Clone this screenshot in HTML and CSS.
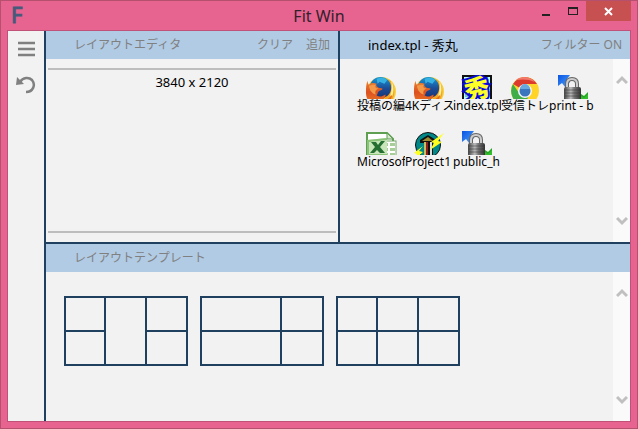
FILE: index.html
```html
<!DOCTYPE html>
<html lang="ja">
<head>
<meta charset="utf-8">
<title>Fit Win</title>
<link rel="stylesheet" href="styles.css">
</head>
<body>
<svg class="defs" aria-hidden="true">
  <defs>
    <linearGradient id="globe" x1="0" y1="0" x2="0" y2="1"><stop offset="0" stop-color="#1798d8"/><stop offset=".55" stop-color="#1c4b94"/><stop offset="1" stop-color="#173378"/></linearGradient>
    <linearGradient id="fur" x1="0" y1="0" x2="0" y2="1"><stop offset="0" stop-color="#e98532"/><stop offset=".45" stop-color="#dc5121"/><stop offset="1" stop-color="#ef8020"/></linearGradient>
    <linearGradient id="metal" x1="0" y1="0" x2="1" y2="0"><stop offset="0" stop-color="#444"/><stop offset=".4" stop-color="#bbb"/><stop offset=".6" stop-color="#777"/><stop offset="1" stop-color="#333"/></linearGradient>
    <linearGradient id="arrow" x1="0" y1="0" x2="1" y2="1"><stop offset="0" stop-color="#0b55e0"/><stop offset="1" stop-color="#4aa0ff"/></linearGradient>
    <symbol id="firefox" viewBox="0 0 32 32">
      <circle cx="17" cy="16" r="15" fill="#f6d03c"/>
      <path d="M24 3c6 4 7 11 6 17-2 6-7 11-14 11 5-7 9-16 8-28z" fill="#f2a51f"/>
      <circle cx="16" cy="12" r="11" fill="url(#globe)"/>
      <path d="M12 3c4-2 9-1 11 1l-3 4-5-2-2 2z" fill="#35b1e2"/>
      <path d="M27 5c3 5 3 11 1 16l-2-1c2-5 2-10 1-15z" fill="#fff09a"/>
      <path d="M3 5c0 2 0 3 1 4 2-2 5-2 8-1-1 2 0 3 2 4l4 1c0 2-3 2-4 3s-1 3-2 4c3 2 6 1 9-1 1 3-2 5-4 6 5 1 9-3 11-6-1 8-6 12-13 12C6 31 1 25 1 17c0-5 0-9 2-12z" fill="url(#fur)"/>
      <path d="M4 10c3-1 5-1 7-1-1 2 0 4 3 4-3 1-4 3-3 6-4-1-6-4-7-9z" fill="#f29a48"/>
    </symbol>
    <symbol id="chrome" viewBox="0 0 32 32">
      <circle cx="16" cy="16" r="14" fill="#ffd328"/>
      <path d="M16 16L4 9A14 14 0 0 1 28 9H16z" fill="#dd3a2e"/>
      <path d="M4 9a14 14 0 0 0 11 21l6-11-5-3-6 2z" fill="#3fae49"/>
      <path d="M7 5c6-5 15-3 19 2-6-3-13-3-19-2z" fill="#f07a6b"/>
      <circle cx="16" cy="16" r="7" fill="#f6f6f6"/>
      <circle cx="16" cy="16" r="5.500" fill="#3976bd"/>
      <path d="M11 14a5 5 0 0 1 10 0z" fill="#69a7df"/>
    </symbol>
    <symbol id="lock" viewBox="0 0 32 32">
      <path d="M1 0h12l-3 4 3 3-5 5-3-4-4 3z" fill="url(#arrow)"/>
      <path d="M31 31V17l-4 4-3-2-5 6 4 3-4 4z" fill="#23a722"/>
      <path d="M10 14V9c0-4 2-5 5-5s5 1 5 5v5" fill="none" stroke="#666" stroke-width="4"/>
      <path d="M10 13V9c0-4 2-5 5-5s5 1 5 5v4" fill="none" stroke="#ccc" stroke-width="2"/>
      <rect x="7" y="12" width="17" height="14" rx="2" fill="url(#metal)"/>
      <path d="M8 15h15M8 18h15M8 21h15" stroke="#333" opacity=".5"/>
      <path d="M24 26v-5l3 2 4-4v9z" fill="#31bd2c"/>
    </symbol>
    <symbol id="excel" viewBox="0 0 32 32">
      <path d="M2 2h20l6 6v24H2z" fill="#fff" stroke="#5f9f52" stroke-width="2"/>
      <path d="M22 2v6h6z" fill="#d5e8cf" stroke="#5f9f52"/>
      <rect x="15" y="10" width="16" height="21" fill="#fff" stroke="#75a86a"/>
      <path d="M17 12h6v3h-6zM25 12h5v3h-5zM17 17h6v3h-6zM25 17h5v3h-5zM17 22h6v3h-6zM25 22h5v3h-5z" fill="#a7ce98"/>
      <path d="M2 9l20-2v17H2z" fill="#c9e5ba"/>
      <path d="M2 9l20-2v2L4 11v12h18v2H2z" fill="#8ac279"/>
      <path d="M6 11h5l2 3 3-4h4l-5 6 5 6h-5l-3-3-3 3H5l5-6z" fill="#246f31"/>
    </symbol>
    <symbol id="project" viewBox="0 0 32 32">
      <circle cx="15" cy="14" r="12.500" fill="#088" stroke="#111"/>
      <path d="M15 4l8 5v3h-3v14h-9V12H7V9z" fill="#111"/>
      <path d="M15 6l5 4H9z" fill="#9b8c32"/>
      <path d="M12 11v14" stroke="#c9bd62" stroke-width="2"/>
      <path d="M14 11v14" stroke="#8f1f1d" stroke-width="2"/>
      <path d="M18 11v14" stroke="#ddd" stroke-width="2"/>
      <path d="M31 2l-6 8 4 1-12 8 4-7-3-1z" fill="#ffff20"/>
      <path d="M10 15l-4 5 4 1-10 9 4-7-3-1z" fill="#ffff20"/>
    </symbol>
    <symbol id="hidemaru" viewBox="0 0 32 32">
      <path d="M2 1h28v28H2z" fill="#b5ffff" stroke="#111" stroke-width="2"/>
      <path d="M4 5h24M4 9h24M4 13h24M4 17h24M4 21h24" stroke="#3a8890"/>
      <text class="glyph" x="16" y="23" transform="rotate(-14 16 14)">秀</text>
    </symbol>
    <symbol id="up" viewBox="0 0 12 10"><path d="M1 8l5-5 5 5" fill="none" stroke="#c0c0c0" stroke-width="3"/></symbol>
    <symbol id="down" viewBox="0 0 12 10"><path d="M1 2l5 5 5-5" fill="none" stroke="#c0c0c0" stroke-width="3"/></symbol>
  </defs>
</svg>
<div class="window">
  <header class="titlebar">
    <span class="logo">F</span>
    <h1 class="title">Fit Win</h1>
    <div class="controls">
      <button class="control" aria-label="最小化"><svg width="10" height="10"><path d="M1 9h8" stroke="#222" stroke-width="2"/></svg></button>
      <button class="control" aria-label="最大化"><svg width="10" height="10"><path d="M0 1h10v8H0zM1 3v5h8V3z" fill="#222" fill-rule="evenodd"/></svg></button>
      <button class="control close" aria-label="閉じる"><svg width="10" height="10"><path d="M1 2l7 7M8 2l-7 7" stroke="#fff" stroke-width="2"/></svg></button>
    </div>
  </header>
  <div class="client">
    <nav class="sidebar">
      <button class="tool" aria-label="メニュー"><svg width="20" height="20"><path d="M2 4h17M2 10h17M2 16h17" stroke="#808080" stroke-width="2.400"/></svg></button>
      <button class="tool" aria-label="元に戻す"><svg width="20" height="20"><path d="M4 7C7 2 13 2 16 5c4 5 1 12-6 12" fill="none" stroke="#808080" stroke-width="2.500"/><path d="M1 2l-1 8 8-1z" fill="#808080"/></svg></button>
    </nav>
    <main class="workspace">
      <div class="upper">
        <section class="editor">
          <header class="bar"><h2>レイアウトエディタ</h2><button class="action">クリア</button><button class="action">追加</button></header>
          <div class="canvas">3840 x 2120</div>
        </section>
        <section class="windows">
          <header class="bar"><h2 class="current">index.tpl - 秀丸</h2><button class="action">フィルター ON</button></header>
          <div class="scroller">
            <ul class="apps">
              <li class="app"><svg class="icon" viewBox="0 0 32 24"><use href="#firefox" y="1" width="31" height="31"/></svg><span>投稿の編集</span></li>
              <li class="app"><svg class="icon" viewBox="0 0 32 24"><use href="#firefox" y="1" width="31" height="31"/></svg><span>4Kディスプ</span></li>
              <li class="app"><svg class="icon" viewBox="0 0 32 24"><use href="#hidemaru" width="32" height="32"/></svg><span>index.tpl</span></li>
              <li class="app"><svg class="icon" viewBox="0 0 32 24"><use href="#chrome" width="32" height="32"/></svg><span>受信トレイ</span></li>
              <li class="app"><svg class="icon" viewBox="0 0 32 24"><use href="#lock" width="32" height="32"/></svg><span>print - b</span></li>
              <li class="app"><svg class="icon" viewBox="0 0 32 24"><use href="#excel" width="32" height="32"/></svg><span>Microsoft</span></li>
              <li class="app"><svg class="icon" viewBox="0 0 32 24"><use href="#project" width="32" height="32"/></svg><span>Project1</span></li>
              <li class="app"><svg class="icon" viewBox="0 0 32 24"><use href="#lock" width="32" height="32"/></svg><span>public_h</span></li>
            </ul>
            <div class="scrollbar"><button class="arrow" aria-label="上へ"><svg width="12" height="10"><use href="#up"/></svg></button><button class="arrow" aria-label="下へ"><svg width="12" height="10"><use href="#down"/></svg></button></div>
          </div>
        </section>
      </div>
      <section class="templates">
        <header class="bar"><h2>レイアウトテンプレート</h2></header>
        <div class="scroller">
          <div class="gallery">
            <div class="layout thirds"><i></i><i class="tall"></i><i></i><i></i><i></i></div>
            <div class="layout wide"><i></i><i></i><i></i><i></i></div>
            <div class="layout thirds"><i></i><i></i><i></i><i></i><i></i><i></i></div>
          </div>
          <div class="scrollbar"><button class="arrow" aria-label="上へ"><svg width="12" height="10"><use href="#up"/></svg></button><button class="arrow" aria-label="下へ"><svg width="12" height="10"><use href="#down"/></svg></button></div>
        </div>
      </section>
    </main>
  </div>
</div>
</body>
</html>
```
FILE: styles.css
```css
* { box-sizing: border-box; }
body { margin: 0; font: 12px/14px "Noto Sans", "Noto Sans CJK JP", sans-serif; color: #000; }
button { padding: 0; border: 0; background: none; font: inherit; color: inherit; }
svg { display: block; }
h1, h2 { margin: 0; font-weight: 400; }
.defs { position: absolute; width: 0; height: 0; }

.window { display: flex; flex-direction: column; min-height: 100vh; padding: 0 6px 6px; border: 1px solid #b5506f; background: #e6648f; }
.titlebar { display: grid; grid-template-columns: 1fr auto 1fr; height: 29px; }
.logo { padding-left: 4px; font-size: 22px; line-height: 26px; color: #465a7c; -webkit-text-stroke: 1px #465a7c; }
.title { font-size: 16px; line-height: 31px; color: #33202d; }
.controls { display: flex; justify-content: flex-end; }
.control { display: flex; align-items: center; justify-content: center; width: 27px; height: 20px; }
.close { width: 45px; background: #c75050; }

.client { flex: 1; display: flex; border: 1px solid #c0527a; background: #f2f2f2; }
.sidebar { display: flex; flex-direction: column; align-items: center; gap: 16px; width: 38px; padding-top: 8px; border-right: 2px solid #204060; }
.workspace { flex: 1; display: grid; grid-template-rows: 213fr 177fr; min-width: 0; }
.upper { display: grid; grid-template-columns: 294fr 290fr; border-bottom: 2px solid #204060; }
.editor, .windows, .templates { display: flex; flex-direction: column; min-width: 0; }
.editor { border-right: 2px solid #204060; }
.bar { display: flex; align-items: center; gap: 13px; height: 28px; padding: 0 8px 0 28px; background: #b1cbe4; color: #808080; }
.bar h2 { flex: 1; font-size: 12px; }
.bar .current { font-size: 13px; color: #000; }
.canvas { flex: 1; margin: 9px 2px; padding-top: 5px; border: solid #bdbdbd; border-width: 2px 0; font-size: 13px; text-align: center; }

.scroller { flex: 1; display: flex; }
.scrollbar { display: flex; flex-direction: column; justify-content: space-between; align-items: center; width: 17px; padding: 16px 0; background: #fafafa; }
.apps { flex: 1; display: grid; grid-template-columns: repeat(auto-fill, 48px); align-content: start; row-gap: 18px; margin: 0; padding: 16px 0 0 17px; list-style: none; }
.app { display: flex; flex-direction: column; align-items: center; }
.icon { width: 32px; height: 24px; }
.app span { width: 48px; overflow: hidden; white-space: nowrap; }
.glyph { font: 900 25px "Noto Sans CJK JP", sans-serif; text-anchor: middle; fill: #ffff28; stroke: #0808d8; stroke-width: 4px; paint-order: stroke; }

.gallery { flex: 1; display: flex; flex-wrap: wrap; align-content: start; gap: 12px; padding: 24px 18px; }
.layout { display: grid; grid-template-rows: 1fr 1fr; gap: 2px; width: 124px; height: 70px; padding: 2px; background: #204060; }
.layout i { background: #f2f2f2; }
.thirds { grid-template-columns: 38fr 39fr 39fr; }
.wide { grid-template-columns: 78fr 40fr; }
.tall { grid-row: span 2; }
```
